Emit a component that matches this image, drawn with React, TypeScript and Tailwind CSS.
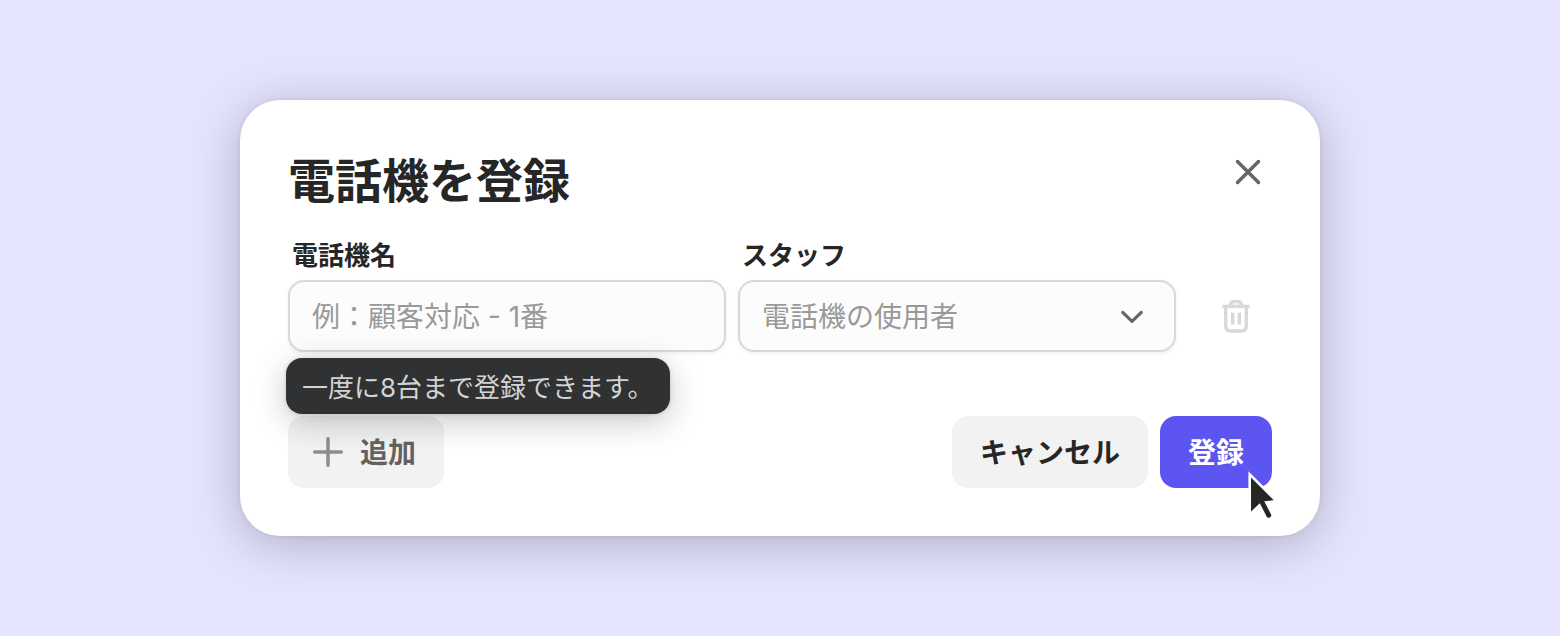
function CloseIcon() {
  return (
    <svg viewBox="0 0 48 48" className="size-12" fill="none" stroke="#666666" strokeWidth="3.5" strokeLinecap="round" aria-hidden="true">
      <path d="M13.5 13.5 34.5 34.5M34.5 13.5 13.5 34.5" />
    </svg>
  );
}

function PlusIcon() {
  return (
    <svg viewBox="0 0 32 32" className="size-8" fill="none" stroke="#8e8e8e" strokeWidth="3.5" strokeLinecap="round" aria-hidden="true">
      <path d="M16 2.7V29.3M2.7 16H29.3" />
    </svg>
  );
}

function ChevronIcon() {
  return (
    <svg viewBox="0 0 24 24" className="pointer-events-none absolute right-8 top-6 size-6" fill="none" stroke="#666666" strokeWidth="3.2" strokeLinecap="round" strokeLinejoin="round" aria-hidden="true">
      <path d="M2.7 8.4 12 17.4 21.3 8.4" />
    </svg>
  );
}

function TrashIcon() {
  return (
    <svg viewBox="0 0 32 40" className="h-10 w-8" fill="none" stroke="#d8d8d8" strokeWidth="3.4" aria-hidden="true">
      <path d="M2.5 10.4H29.5" />
      <path d="M10.9 10V7.8Q10.9 5.6 13.5 5.6H18.5Q21.1 5.6 21.1 7.8V10" />
      <path d="M5.7 10.4V29.8Q5.7 35 10.9 35H21.1Q26.3 35 26.3 29.8V10.4" />
      <path d="M12.7 16.8V28.6M19.3 16.8V28.6" />
    </svg>
  );
}

function Cursor() {
  return (
    <svg viewBox="0 0 36 56" className="pointer-events-none absolute -bottom-9 -right-2 h-14 w-9" aria-hidden="true">
      <path
        d="M7 9.6V43.6L15.8 35.2 22.6 48.4Q23.6 50.4 25.8 49.4 28 48.3 27 46.2L20.2 33.2 29.8 32.2Z"
        fill="#262626"
        stroke="#ffffff"
        strokeWidth="5.2"
        strokeMiterlimit="8"
        paintOrder="stroke"
      />
    </svg>
  );
}

export default function App() {
  return (
    <main className="flex min-h-screen items-center justify-center bg-[#e5e4ff] p-6 font-['Inter','Noto_Sans_CJK_JP',sans-serif] text-[#262626]">
      <section
        role="dialog"
        aria-labelledby="dialog-title"
        className="w-full max-w-[1080px] rounded-[40px] bg-white p-12 shadow-[0_0_4px_rgba(0,0,0,0.08),0_8px_48px_rgba(0,0,0,0.24)]"
      >
        <header className="flex items-start justify-between">
          <h1 id="dialog-title" className="text-[47px] leading-[66px] font-bold">電話機を登録</h1>
          <button type="button" aria-label="閉じる">
            <CloseIcon />
          </button>
        </header>

        <form className="mt-6" onSubmit={(event) => event.preventDefault()}>
          <div className="flex items-end gap-3">
            <div className="relative min-w-0 flex-1">
              <label htmlFor="phone-name" className="mb-1.5 block px-1 text-[26px] leading-9 font-bold">電話機名</label>
              <input
                id="phone-name"
                type="text"
                placeholder="例：顧客対応 - 1番"
                aria-describedby="phone-limit"
                className="block h-18 w-full rounded-2xl border-2 border-[#d8d8d8] bg-[#fcfcfc] px-[22px] pt-0.5 text-[28px] shadow-[0_2px_4px_rgba(0,0,0,0.06)] outline-none placeholder:text-[#999999]"
              />
              <div
                id="phone-limit"
                role="tooltip"
                className="absolute top-full -left-0.5 z-10 mt-1.5 rounded-2xl bg-[#303133] px-4 pt-2.5 pb-1.5 text-[26px] leading-10 whitespace-nowrap text-[#d4d4d4] shadow-[0_0_4px_rgba(0,0,0,0.14),0_8px_32px_rgba(0,0,0,0.22)]"
              >
                一度に8台まで登録できます。
              </div>
            </div>
            <div className="min-w-0 flex-1">
              <label htmlFor="staff" className="mb-1.5 block px-1 text-[26px] leading-9 font-bold">スタッフ</label>
              <div className="relative">
                <select
                  id="staff"
                  defaultValue=""
                  className="block h-18 w-full appearance-none rounded-2xl border-2 border-[#d8d8d8] bg-[#fcfcfc] px-[22px] pt-0.5 text-[28px] text-[#999999] shadow-[0_2px_4px_rgba(0,0,0,0.06)] outline-none"
                >
                  <option value="">電話機の使用者</option>
                </select>
                <ChevronIcon />
              </div>
            </div>
            <button type="button" aria-label="削除" className="ml-3 flex size-18 items-center justify-center">
              <TrashIcon />
            </button>
          </div>

          <div className="mt-16 flex items-center gap-3">
            <button type="button" className="mr-auto flex h-18 items-center gap-4 rounded-2xl bg-[#f2f2f2] pr-7 pl-6 text-[28px] font-bold text-[#626262]">
              <PlusIcon />
              <span className="pt-0.5">追加</span>
            </button>
            <button type="button" className="h-18 rounded-2xl bg-[#f2f2f2] px-7 pt-0.5 text-[28px] font-bold">キャンセル</button>
            <div className="relative">
              <button type="submit" className="h-18 rounded-2xl bg-[#5c55f2] px-7 pt-0.5 text-[28px] font-bold text-white">登録</button>
              <Cursor />
            </div>
          </div>
        </form>
      </section>
    </main>
  );
}
